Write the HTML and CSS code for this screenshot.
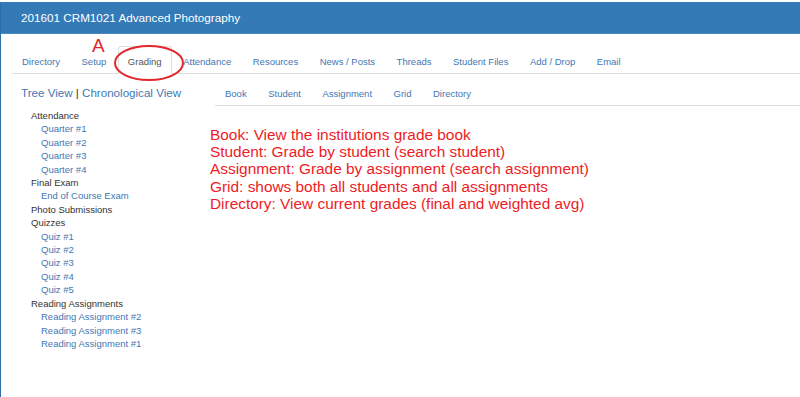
FILE: index.html
```html
<!DOCTYPE html>
<html lang="en">
<head>
    <meta charset="UTF-8">
    <meta name="viewport" content="width=device-width, initial-scale=1.0">
    <title>201601 CRM1021 Advanced Photography - Grading</title>
    <link rel="stylesheet" href="styles.css">
</head>
<body>
<div class="panel">
    <div class="panel-heading">201601 CRM1021 Advanced Photography</div>

    <div class="panel-body">
        <!-- Course tabs -->
        <ul class="tabs course-tabs">
            <li><a href="#">Directory</a></li>
            <li><a href="#">Setup</a></li>
            <li class="active"><a href="#">Grading</a></li>
            <li><a href="#">Attendance</a></li>
            <li><a href="#">Resources</a></li>
            <li><a href="#">News / Posts</a></li>
            <li><a href="#">Threads</a></li>
            <li><a href="#">Student Files</a></li>
            <li><a href="#">Add / Drop</a></li>
            <li><a href="#">Email</a></li>
        </ul>

        <div class="grading">
            <div class="sidebar">
                <div class="view-links">
                    <a href="#">Tree View</a> <span class="sep">|</span> <a href="#">Chronological View</a>
                </div>
                <ul class="tree">
                    <li>Attendance
                        <ul>
                            <li><a href="#">Quarter #1</a></li>
                            <li><a href="#">Quarter #2</a></li>
                            <li><a href="#">Quarter #3</a></li>
                            <li><a href="#">Quarter #4</a></li>
                        </ul>
                    </li>
                    <li>Final Exam
                        <ul>
                            <li><a href="#">End of Course Exam</a></li>
                        </ul>
                    </li>
                    <li>Photo Submissions</li>
                    <li>Quizzes
                        <ul>
                            <li><a href="#">Quiz #1</a></li>
                            <li><a href="#">Quiz #2</a></li>
                            <li><a href="#">Quiz #3</a></li>
                            <li><a href="#">Quiz #4</a></li>
                            <li><a href="#">Quiz #5</a></li>
                        </ul>
                    </li>
                    <li>Reading Assignments
                        <ul>
                            <li><a href="#">Reading Assignment #2</a></li>
                            <li><a href="#">Reading Assignment #3</a></li>
                            <li><a href="#">Reading Assignment #1</a></li>
                        </ul>
                    </li>
                </ul>
            </div>

            <div class="main">
                <ul class="tabs grade-tabs">
                    <li><a href="#">Book</a></li>
                    <li><a href="#">Student</a></li>
                    <li><a href="#">Assignment</a></li>
                    <li><a href="#">Grid</a></li>
                    <li><a href="#">Directory</a></li>
                </ul>

                <!-- Annotation notes -->
                <div class="notes">
                    <p>Book: View the institutions grade book</p>
                    <p>Student: Grade by student (search student)</p>
                    <p>Assignment: Grade by assignment (search assignment)</p>
                    <p>Grid: shows both all students and all assignments</p>
                    <p>Directory: View current grades (final and weighted avg)</p>
                </div>
            </div>
        </div>
    </div>

    <!-- Annotation marks over the Grading tab -->
    <span class="mark-letter">A</span>
    <svg class="mark-ring" width="72" height="38" viewBox="0 0 72 38">
        <ellipse cx="36" cy="19" rx="34" ry="17" fill="none" stroke="#e3262d" stroke-width="2"/>
    </svg>
</div>
</body>
</html>
```

FILE: styles.css
```css
/* General styles */
body {
    font-family: "Liberation Sans", Arial, sans-serif;
    background-color: #ffffff;
    color: #333333;
    margin: 0;
    padding: 0;
}

a {
    color: #3f77b3;
    text-decoration: none;
}

ul {
    list-style: none;
    margin: 0;
    padding: 0;
}

/* Panel styles */
.panel {
    position: relative;
    min-height: 395px;
    margin-top: 2px;
    border-left: 1px solid #2f6da8;
}

.panel-heading {
    height: 31px;
    padding-left: 20px;
    background-color: #337ab7;
    color: #ffffff;
    font-size: 11.7px;
    line-height: 31px;
    border-bottom: 1px solid #4a88c0;
}

.panel-body {
    padding-top: 12px;
}

/* Tab styles */
.tabs {
    display: flex;
    border-bottom: 1px solid #dddddd;
    font-size: 9.5px;
}

.tabs li {
    margin-right: 1.5px;
}

.tabs a {
    display: block;
    height: 26px;
    line-height: 29px;
    padding: 0 9px;
    border: 1px solid transparent;
    border-bottom: none;
    border-radius: 3px 3px 0 0;
}

.tabs .active a {
    color: #555555;
    border-color: #dddddd;
    background-color: #ffffff;
    margin-bottom: -1px;
    height: 27px;
}

.course-tabs {
    margin-left: 11px;
}

/* Grading layout */
.grading {
    display: flex;
    padding-left: 20px;
}

.sidebar {
    width: 194px;
}

.view-links {
    padding-top: 12px;
    font-size: 11.6px;
    color: #3f77b3;
}

.view-links .sep {
    color: #333333;
}

.tree {
    margin-top: 10px;
    padding-left: 10px;
    font-size: 9.5px;
    line-height: 13.4px;
    color: #333333;
}

.tree ul {
    padding-left: 10px;
}

.main {
    flex: 1;
}

.grade-tabs {
    margin-top: 4px;
}

/* Annotation styles */
.notes {
    margin: 20px 0 0 -5px;
    color: #ee1c24;
    font-size: 15.4px;
    line-height: 17.2px;
}

.notes p {
    margin: 0;
}

.mark-letter {
    position: absolute;
    left: 91px;
    top: 33px;
    color: #e3262d;
    font-size: 19px;
    line-height: 22px;
}

.mark-ring {
    position: absolute;
    left: 112px;
    top: 42px;
}
```
